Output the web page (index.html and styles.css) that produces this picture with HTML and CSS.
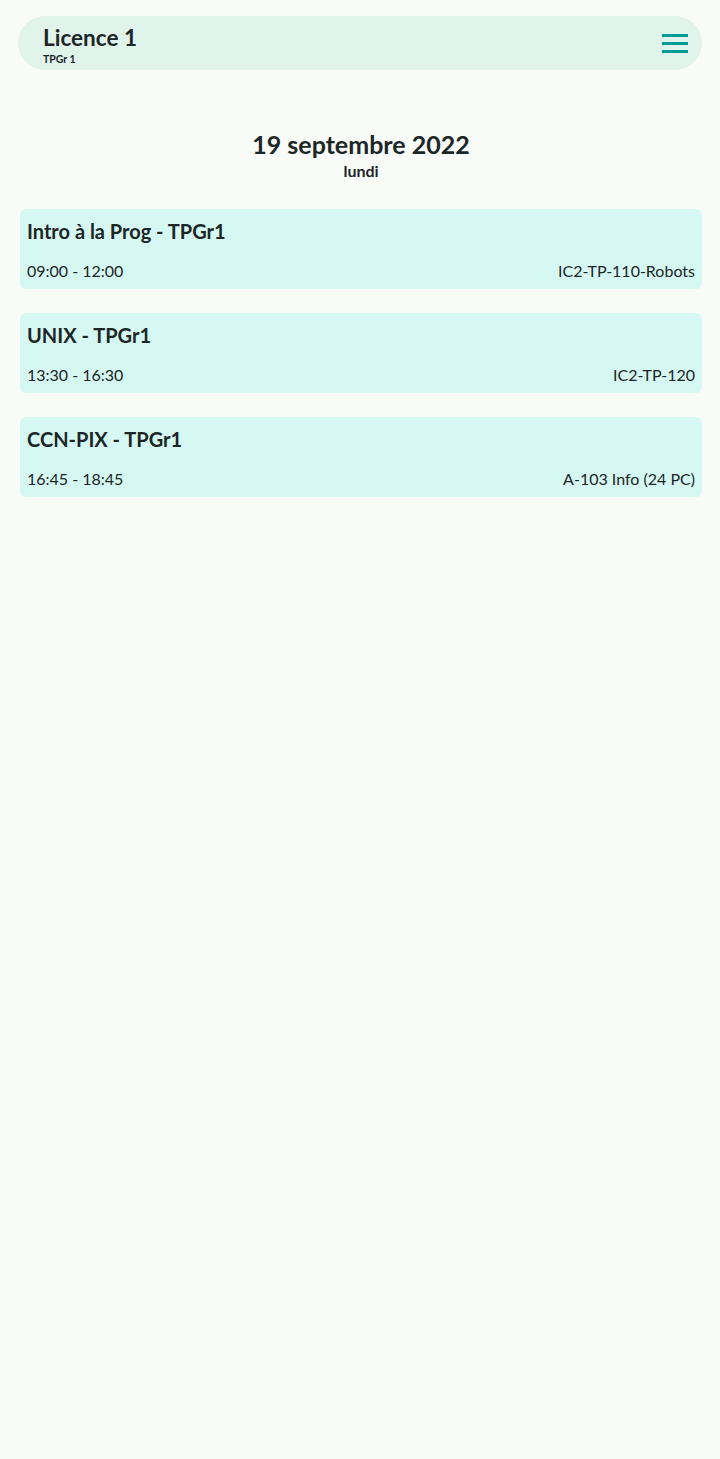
FILE: index.html
```html
<!DOCTYPE html>
<html lang="fr">
<head>
<meta charset="utf-8">
<link rel="stylesheet" href="styles.css">
</head>
<body>
<header class="bar">
  <div class="bar-titles">
    <div class="bar-title">Licence 1</div>
    <div class="bar-sub">TPGr 1</div>
  </div>
  <svg class="menu" width="26" height="19" viewBox="0 0 26 19"><rect x="0" y="0" width="26" height="3" fill="#009c95"/><rect x="0" y="8" width="26" height="3" fill="#009c95"/><rect x="0" y="16" width="26" height="3" fill="#009c95"/></svg>
</header>
<main>
  <div class="day">
    <div class="date">19 septembre 2022</div>
    <div class="weekday">lundi</div>
  </div>
  <div class="list">
    <div class="card">
      <div class="card-title">Intro à la Prog - TPGr1</div>
      <div class="card-row"><span>09:00 - 12:00</span><span>IC2-TP-110-Robots</span></div>
    </div>
    <div class="card">
      <div class="card-title">UNIX - TPGr1</div>
      <div class="card-row"><span>13:30 - 16:30</span><span>IC2-TP-120</span></div>
    </div>
    <div class="card">
      <div class="card-title">CCN-PIX - TPGr1</div>
      <div class="card-row"><span>16:45 - 18:45</span><span>A-103 Info (24 PC)</span></div>
    </div>
  </div>
</main>
</body>
</html>
```
FILE: styles.css
```css
html, body {
  margin: 0;
  padding: 0;
  background: #f8fbf8;
  font-family: Lato, "Noto Sans", sans-serif;
  color: #1d2626;
}
body {
  padding: 16px 18px 0 18px;
  min-height: 1459px;
  box-sizing: border-box;
}
.bar {
  height: 54px;
  border-radius: 27px;
  background: #e0f4ec;
  display: flex;
  align-items: center;
  justify-content: space-between;
  padding: 0 14px 0 25px;
}
.bar-titles {
  display: flex;
  flex-direction: column;
  padding-top: 5px;
}
.bar-title {
  font-size: 22.5px;
  font-weight: 700;
  line-height: 24px;
}
.bar-sub {
  font-size: 10.5px;
  font-weight: 700;
  line-height: 13px;
  margin-top: 3px;
}
.menu {
  display: block;
}
main {
  padding: 0 0 0 2px;
}
.day {
  text-align: center;
  padding-top: 58px;
}
.date {
  font-size: 25px;
  font-weight: 700;
  line-height: 32px;
}
.weekday {
  font-size: 16px;
  font-weight: 700;
  line-height: 22px;
}
.list {
  display: flex;
  flex-direction: column;
  gap: 24px;
  margin-top: 27px;
}
.card {
  background: #d5f8f3;
  border-radius: 6px;
  height: 80px;
  box-sizing: border-box;
  padding: 10px 7px 0 7px;
  display: flex;
  flex-direction: column;
}
.card-title {
  font-size: 20px;
  font-weight: 700;
  line-height: 24px;
}
.card-row {
  display: flex;
  justify-content: space-between;
  font-size: 16px;
  line-height: 20px;
  margin-top: 18px;
}
```
